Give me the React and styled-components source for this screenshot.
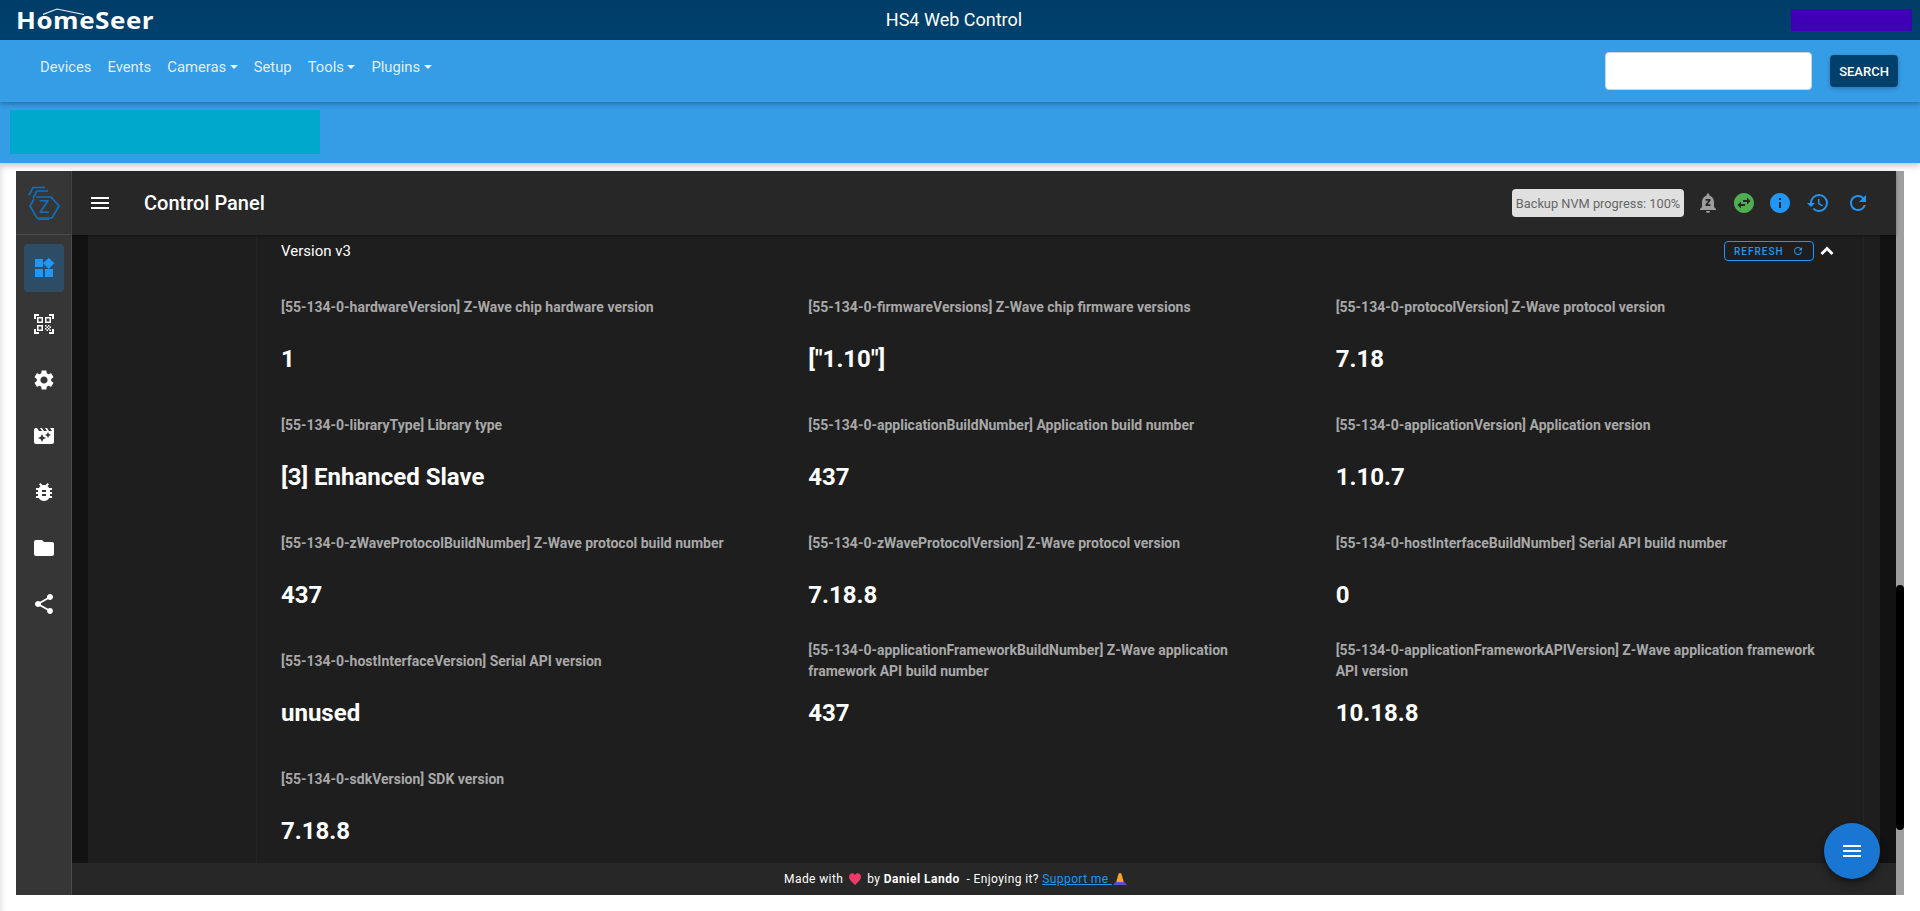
import React from 'react';
import styled, { createGlobalStyle } from 'styled-components';
import {
  MdWidgets, MdQrCodeScanner, MdSettings, MdMovieFilter, MdBugReport, MdFolder, MdShare, MdMenu,
  MdNotificationsPaused, MdSwapHorizontalCircle, MdInfo, MdHistory, MdRefresh,
} from 'react-icons/md';

const Global = createGlobalStyle`
  html, body { margin: 0; padding: 0; background: #fff; overflow: hidden; }
  body { font-family: Roboto, "Liberation Sans", sans-serif; }
  * { box-sizing: border-box; }
`;

const Page = styled.div`
  width: 1920px;
  height: 911px;
  display: flex;
  flex-direction: column;
  overflow: hidden;
`;

const TopBar = styled.header`
  height: 40px;
  flex: none;
  display: grid;
  grid-template-columns: 1fr auto 1fr;
  align-items: center;
  padding: 0 8px 0 16px;
  background: linear-gradient(#003d68, #00416e);
  color: #fff;
`;

const Brand = styled.div`
  position: relative;
  width: 138px;
  height: 30px;
  display: flex;
  align-items: flex-end;
`;

const BrandName = styled.span`
  font-family: "Open Sans", sans-serif;
  font-size: 22.4px;
  font-weight: 700;
  line-height: 30px;
  letter-spacing: 0.5px;
  white-space: nowrap;
  color: #fff;
  margin-top: 2px;
  transform: scaleX(1.16) translateY(1px);
  transform-origin: left center;
`;

const Roof = styled.svg`
  position: absolute;
  left: 27px;
  top: 3px;
  width: 41px;
  height: 7px;
`;

const TopTitle = styled.div`
  font-size: 18px;
  line-height: 40px;
  margin-right: 20px;
`;

const Swatch = styled.div`
  justify-self: end;
  width: 121px;
  height: 22px;
  background: #3f00b5;
`;

const NavBar = styled.nav`
  height: 62px;
  flex: none;
  display: flex;
  justify-content: space-between;
  align-items: flex-start;
  padding: 12px 22px 0 40px;
  background: #359ce6;
  box-shadow: 0 2px 5px rgba(0, 0, 0, 0.28);
  position: relative;
  z-index: 2;
`;

const NavLinks = styled.div`
  display: flex;
  gap: 16px;
  height: 30px;
  align-items: center;
`;

const NavLink = styled.a`
  font-size: 14.8px;
  color: rgba(255, 255, 255, 0.86);
  display: inline-flex;
  align-items: center;
  &::after {
    content: ${(p) => (p.$caret ? '""' : 'none')};
    margin-left: 3.5px;
    border-top: 4.5px solid rgba(255, 255, 255, 0.9);
    border-left: 4px solid transparent;
    border-right: 4px solid transparent;
  }
`;

const SearchBox = styled.div`
  display: flex;
  align-items: center;
  gap: 18px;
`;

const SearchInput = styled.input`
  width: 207px;
  height: 38px;
  background: #fff;
  border: 1px solid #ced4da;
  border-radius: 4px;
  outline: none;
`;

const SearchButton = styled.button`
  width: 68px;
  height: 32px;
  border: 0;
  border-radius: 4px;
  background: #00406c;
  color: #fff;
  font: 500 13px Roboto, sans-serif;
  box-shadow: 0 2px 4px rgba(0, 0, 0, 0.22);
`;

const Band = styled.div`
  height: 61px;
  flex: none;
  padding: 8px 0 0 10px;
  background: #359ce6;
  box-shadow: 0 3px 6px rgba(0, 0, 0, 0.22);
  position: relative;
  z-index: 1;
`;

const BandBlock = styled.div`
  width: 310px;
  height: 44px;
  background: #00a9cc;
`;

const Shell = styled.div`
  flex: 1;
  min-height: 0;
  padding: 8px 16px 16px;
  background: #fff;
  box-shadow: inset 7px 0 6px -6px rgba(0, 0, 0, 0.14);
  display: flex;
`;

const AppFrame = styled.div`
  position: relative;
  flex: 1;
  display: flex;
  min-width: 0;
  background: #121212;
`;

const Rail = styled.aside`
  width: 56px;
  flex: none;
  display: flex;
  flex-direction: column;
  background: #363636;
  box-shadow: inset -1px 0 0 #4a4a4a;
`;

const RailLogo = styled.div`
  height: 64px;
  flex: none;
  display: flex;
  align-items: center;
  justify-content: center;
  box-shadow: inset -1px 0 0 #4a4a4a, inset 0 -1px 0 #4a4a4a;
`;

const RailList = styled.div`
  display: flex;
  flex-direction: column;
  align-items: center;
  gap: 8px;
  padding-top: 9px;
`;

const RailItem = styled.div`
  width: 40px;
  height: 48px;
  border-radius: 4px;
  display: flex;
  align-items: center;
  justify-content: center;
  font-size: 24px;
  color: ${(p) => (p.$active ? '#2196f3' : '#fff')};
  background: ${(p) => (p.$active ? '#2d4c66' : 'transparent')};
`;

const Main = styled.div`
  flex: 1;
  min-width: 0;
  display: flex;
  flex-direction: column;
`;

const AppHeader = styled.div`
  height: 64px;
  flex: none;
  display: flex;
  align-items: center;
  padding: 0 18px 0 16px;
  background: #272727;
  color: #fff;
  box-shadow: 0 1px 3px rgba(0, 0, 0, 0.3);
  position: relative;
  z-index: 1;
`;

const MenuIcon = styled.span`
  display: flex;
  font-size: 24px;
  margin-right: 32px;
`;

const AppTitle = styled.div`
  flex: 1;
  font-size: 20px;
  font-weight: 500;
`;

const Chip = styled.div`
  width: 172px;
  height: 28px;
  border-radius: 4px;
  display: flex;
  align-items: center;
  justify-content: center;
  margin-right: 6px;
  background: #e0e0e0;
  color: #666;
  font-size: 12.8px;
  white-space: nowrap;
`;

const HeaderIcon = styled.span`
  width: ${(p) => (p.$wide ? '40px' : '36px')};
  height: 36px;
  display: flex;
  align-items: center;
  justify-content: center;
  font-size: 24px;
  color: ${(p) => p.$color};
`;

const Scroller = styled.div`
  flex: 1;
  min-height: 0;
  overflow: hidden;
  padding: 0 16px;
  background: #121212;
`;

const PanelBody = styled.div`
  height: 100%;
  padding: 0 16px 0 168px;
  background: #1e1e1e;
`;

const Section = styled.section`
  height: 100%;
  border-left: 1px solid #242424;
  border-right: 1px solid #242424;
  overflow: hidden;
`;

const SectionHead = styled.div`
  height: 32px;
  display: flex;
  align-items: center;
  justify-content: space-between;
  padding: 0 24px 0 24px;
  color: #fff;
  font-size: 15px;
`;

const HeadActions = styled.div`
  display: flex;
  align-items: center;
`;

const RefreshButton = styled.button`
  width: 90px;
  height: 20px;
  padding: 0 9px;
  display: flex;
  align-items: center;
  justify-content: space-between;
  background: transparent;
  border: 1px solid #2196f3;
  border-radius: 4px;
  color: #2196f3;
  font: 500 10px Roboto, sans-serif;
  letter-spacing: 1px;
  svg { font-size: 12px; }
`;

const Chevron = styled.svg`
  width: 24px;
  height: 24px;
  margin-left: 1px;
  fill: none;
  stroke: #fff;
  stroke-width: 2.8;
`;

const Grid = styled.div`
  display: grid;
  grid-template-columns: repeat(3, 1fr);
  column-gap: 8px;
  padding: 16px 8px 0 24px;
`;

const Cell = styled.div`
  height: 118px;
  color: #fff;
`;

const Label = styled.div`
  height: 48px;
  max-width: 484px;
  display: flex;
  align-items: center;
  font-size: 14px;
  font-weight: 700;
  line-height: 21px;
  color: #a8a8a8;
`;

const Value = styled.div`
  margin-top: 12px;
  font-size: 24px;
  font-weight: 700;
  line-height: 32px;
  color: #fff;
`;

const Footer = styled.footer`
  height: 32px;
  flex: none;
  display: flex;
  align-items: center;
  justify-content: center;
  padding-right: 56px;
  background: #272727;
  color: #fff;
  font-size: 12px;
  letter-spacing: 0.4px;
  white-space: pre;
`;

const Strong = styled.strong`
  font-weight: 700;
  letter-spacing: 0.5px;
`;

const SupportLink = styled.a`
  display: inline-flex;
  align-items: center;
  color: #2196f3;
  text-decoration: underline;
  white-space: pre;
`;

const Emoji = styled.svg`
  width: ${(p) => p.$w}px;
  height: 14px;
  margin: ${(p) => p.$m};
`;

const Track = styled.div`
  width: 8px;
  flex: none;
  background: #9e9e9e;
`;

const Thumb = styled.div`
  width: 8px;
  height: 245px;
  margin-top: 414px;
  border-radius: 4px;
  background: #000;
`;

const Fab = styled.div`
  position: absolute;
  right: 16px;
  bottom: 16px;
  width: 56px;
  height: 56px;
  border-radius: 50%;
  display: flex;
  align-items: center;
  justify-content: center;
  font-size: 24px;
  color: #fff;
  background: #1976d2;
  box-shadow: 0 3px 5px rgba(0, 0, 0, 0.3), 0 6px 10px rgba(0, 0, 0, 0.2);
  z-index: 3;
`;

const RAIL = [MdWidgets, MdQrCodeScanner, MdSettings, MdMovieFilter, MdBugReport, MdFolder, MdShare];

const ROWS = [
  ['hardwareVersion', 'Z-Wave chip hardware version', '1'],
  ['firmwareVersions', 'Z-Wave chip firmware versions', '["1.10"]'],
  ['protocolVersion', 'Z-Wave protocol version', '7.18'],
  ['libraryType', 'Library type', '[3] Enhanced Slave'],
  ['applicationBuildNumber', 'Application build number', '437'],
  ['applicationVersion', 'Application version', '1.10.7'],
  ['zWaveProtocolBuildNumber', 'Z-Wave protocol build number', '437'],
  ['zWaveProtocolVersion', 'Z-Wave protocol version', '7.18.8'],
  ['hostInterfaceBuildNumber', 'Serial API build number', '0'],
  ['hostInterfaceVersion', 'Serial API version', 'unused'],
  ['applicationFrameworkBuildNumber', 'Z-Wave application framework API build number', '437'],
  ['applicationFrameworkAPIVersion', 'Z-Wave application framework API version', '10.18.8'],
  ['sdkVersion', 'SDK version', '7.18.8'],
];

const ZLogo = () => (
  <svg width="32" height="34" viewBox="0 0 32 34" fill="none" stroke="#1270bd" strokeWidth="1.7">
    <path d="M1 9 L5 1.5 H17" />
    <path d="M5 12 L9 5 H20" />
    <path d="M8 11 H23 L31 20 L24 32 H9 L2 20 L6 13" />
    <path d="M20 32 L21 33.5 H10" strokeWidth="1" />
    <text x="16.5" y="27" textAnchor="middle" fill="#1270bd" stroke="none" fontFamily="Roboto, sans-serif" fontSize="18">Z</text>
  </svg>
);

export default function App() {
  return (
    <Page>
      <Global />
      <TopBar>
        <Brand>
          <BrandName>HomeSeer</BrandName>
          <Roof viewBox="0 0 41 7" fill="none" stroke="#e6eef4" strokeWidth="1.2">
            <path d="M0 6.5 L14 1 L41 6.5" />
          </Roof>
        </Brand>
        <TopTitle>HS4 Web Control</TopTitle>
        <Swatch />
      </TopBar>
      <NavBar>
        <NavLinks>
          <NavLink>Devices</NavLink>
          <NavLink>Events</NavLink>
          <NavLink $caret>Cameras</NavLink>
          <NavLink>Setup</NavLink>
          <NavLink $caret>Tools</NavLink>
          <NavLink $caret>Plugins</NavLink>
        </NavLinks>
        <SearchBox>
          <SearchInput />
          <SearchButton>SEARCH</SearchButton>
        </SearchBox>
      </NavBar>
      <Band>
        <BandBlock />
      </Band>
      <Shell>
        <AppFrame>
          <Rail>
            <RailLogo>
              <ZLogo />
            </RailLogo>
            <RailList>
              {RAIL.map((Icon, i) => (
                <RailItem key={i} $active={i === 0}>
                  <Icon />
                </RailItem>
              ))}
            </RailList>
          </Rail>
          <Main>
            <AppHeader>
              <MenuIcon><MdMenu /></MenuIcon>
              <AppTitle>Control Panel</AppTitle>
              <Chip>Backup NVM progress: 100%</Chip>
              <HeaderIcon $color="#9e9e9e"><MdNotificationsPaused /></HeaderIcon>
              <HeaderIcon $color="#4caf50"><MdSwapHorizontalCircle /></HeaderIcon>
              <HeaderIcon $color="#2196f3"><MdInfo /></HeaderIcon>
              <HeaderIcon $color="#2196f3" $wide><MdHistory /></HeaderIcon>
              <HeaderIcon $color="#2196f3" $wide><MdRefresh /></HeaderIcon>
            </AppHeader>
            <Scroller>
              <PanelBody>
                <Section>
                  <SectionHead>
                    Version v3
                    <HeadActions>
                      <RefreshButton>REFRESH <MdRefresh /></RefreshButton>
                      <Chevron viewBox="0 0 24 24"><path d="M6.5 15 L12 9.5 L17.5 15" /></Chevron>
                    </HeadActions>
                  </SectionHead>
                  <Grid>
                    {ROWS.map(([id, text, value]) => (
                      <Cell key={id}>
                        <Label><span>{`[55-134-0-${id}] ${text}`}</span></Label>
                        <Value>{value}</Value>
                      </Cell>
                    ))}
                  </Grid>
                </Section>
              </PanelBody>
            </Scroller>
            <Footer>
              Made with
              <Emoji $w={14} $m="0 5px 0 5px" viewBox="0 0 14 14">
                <path d="M7 13 C3 9.5 1 7.5 1 4.8 C1 2.6 2.6 1.3 4.2 1.3 C5.4 1.3 6.4 1.9 7 3 C7.6 1.9 8.6 1.3 9.8 1.3 C11.4 1.3 13 2.6 13 4.8 C13 7.5 11 9.5 7 13 Z" fill="#ef3a68" />
              </Emoji>
              {'by '}<Strong>Daniel Lando</Strong>{'  - Enjoying it? '}<SupportLink>{'Support me '}<Emoji $w={16} $m="0" viewBox="0 0 16 14">
                <path d="M8 1 C9.4 1 10 3 10.5 5.5 L12 11 H4 L5.5 5.5 C6 3 6.6 1 8 1 Z" fill="#f5a623" />
                <path d="M3.5 10 H12.5 L15 13 H1 Z" fill="#5c4ccf" />
              </Emoji></SupportLink>
            </Footer>
          </Main>
          <Fab><MdMenu /></Fab>
        </AppFrame>
        <Track><Thumb /></Track>
      </Shell>
    </Page>
  );
}
